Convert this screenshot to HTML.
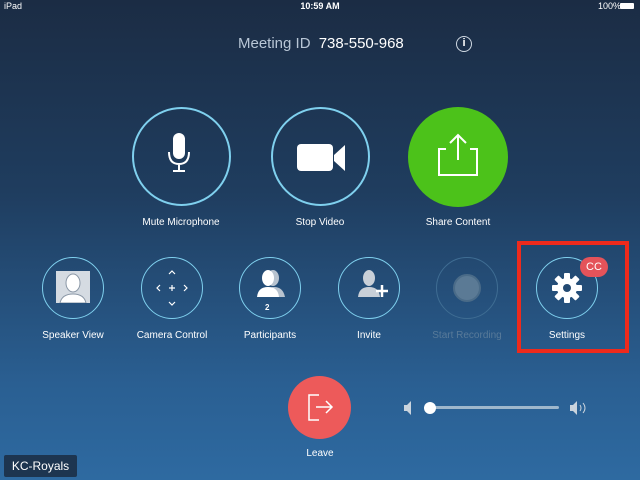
<!DOCTYPE html>
<html><head><style>
body{margin:0;width:640px;height:480px;overflow:hidden;font-family:"Liberation Sans",sans-serif;color:#fff;
background:linear-gradient(180deg,#1b2c44 0%,#1f3d5f 40%,#2a5f92 80%,#2e6aa1 100%);position:relative}
.a{position:absolute}
.lbl{position:absolute;font-size:10px;text-align:center;width:120px;margin-left:-60px}
.c{position:absolute;border-radius:50%;box-sizing:border-box}
</style></head><body>
<div class="a" style="left:4px;top:1px;font-size:9px">iPad</div>
<div class="a" style="left:0;width:640px;top:1px;text-align:center;font-size:9px;font-weight:bold">10:59 AM</div>
<div class="a" style="left:598px;top:1px;font-size:9px">100%</div>
<div class="a" style="left:620px;top:3px;width:14px;height:6px;background:#fff;border-radius:1px"></div>
<div class="a" style="left:238px;top:35px;font-size:15px;color:#b8c6d6">Meeting ID <span style="color:#fff;margin-left:4px">738-550-968</span></div>
<div class="c" style="left:456px;top:36px;width:16px;height:16px;border:1.5px solid #cfd8e2;font-size:11px;text-align:center;line-height:13px;font-weight:bold">i</div>

<div class="c" style="left:132px;top:107px;width:99px;height:99px;border:2px solid #7fd0ee"></div>
<svg class="a" style="left:166px;top:132px" width="30" height="50"><rect x="7" y="1" width="12" height="26" rx="6" fill="#fff"/><path d="M3 20 q0 12 10 12 q10 0 10-12 M13 32 v7 M7 39 h12" stroke="#fff" stroke-width="2" fill="none"/></svg>
<div class="lbl" style="left:181px;top:217px">Mute Microphone</div>

<div class="c" style="left:271px;top:107px;width:99px;height:99px;border:2px solid #7fd0ee"></div>
<svg class="a" style="left:296px;top:142px" width="50" height="32"><rect x="1" y="2" width="36" height="27" rx="4" fill="#fff"/><path d="M38 13 L49 3 V29 L38 19 Z" fill="#fff"/></svg>
<div class="lbl" style="left:320px;top:217px">Stop Video</div>

<div class="c" style="left:408px;top:107px;width:100px;height:100px;background:#4cc21a"></div>
<svg class="a" style="left:436px;top:132px" width="46" height="44"><path d="M10 17 H3 V43 H41 V17 H34 M22 3 V28 M14 11 L22 3 L30 11" stroke="#fff" stroke-width="2" fill="none"/></svg>
<div class="lbl" style="left:458px;top:217px">Share Content</div>

<div class="c" style="left:42px;top:257px;width:62px;height:62px;border:1.5px solid #7fd0ee"></div>
<div class="a" style="left:56px;top:271px;width:34px;height:32px;background:#d5dbe2"></div>
<svg class="a" style="left:56px;top:271px" width="34" height="32"><ellipse cx="17" cy="12" rx="7" ry="9" fill="#fff" stroke="#8a97a6"/><path d="M4 32 q2-9 13-9 q11 0 13 9Z" fill="#fff" stroke="#8a97a6"/></svg>
<div class="lbl" style="left:73px;top:330px">Speaker View</div>

<div class="c" style="left:141px;top:257px;width:62px;height:62px;border:1.5px solid #7fd0ee"></div>
<svg class="a" style="left:152px;top:268px" width="40" height="40" fill="none" stroke="#fff" stroke-width="1.2"><path d="M17 6 l3-3 l3 3 M17 34 l3 3 l3-3 M8 17 l-3 3 l3 3 M32 17 l3 3 l-3 3 M20 17 v6 M17 20 h6"/></svg>
<div class="lbl" style="left:172px;top:330px">Camera Control</div>

<div class="c" style="left:239px;top:257px;width:62px;height:62px;border:1.5px solid #7fd0ee"></div>
<svg class="a" style="left:252px;top:269px" width="36" height="30"><ellipse cx="21" cy="9" rx="6" ry="8" fill="#b8c3cf"/><path d="M12 28 q1-10 10-10 q9 0 11 10Z" fill="#b8c3cf"/><ellipse cx="16" cy="9" rx="6" ry="8" fill="#fff"/><path d="M5 28 q1-10 11-10 q10 0 11 10Z" fill="#fff"/></svg>
<div class="a" style="left:265px;top:303px;font-size:8px;font-weight:bold">2</div>
<div class="lbl" style="left:270px;top:330px">Participants</div>

<div class="c" style="left:338px;top:257px;width:62px;height:62px;border:1.5px solid #7fd0ee"></div>
<svg class="a" style="left:352px;top:269px" width="36" height="30"><ellipse cx="17" cy="9" rx="6" ry="8" fill="#c9d0d8"/><path d="M6 28 q1-10 11-10 q10 0 11 10Z" fill="#c9d0d8"/><path d="M30 16 v12 M24 22 h12" stroke="#fff" stroke-width="2.5"/></svg>
<div class="lbl" style="left:369px;top:330px">Invite</div>

<div class="c" style="left:436px;top:257px;width:62px;height:62px;border:1.5px solid #3f6d93"></div>
<div class="c" style="left:453px;top:274px;width:28px;height:28px;background:#5b7a95;border:2px solid #4a6b88"></div>
<div class="lbl" style="left:467px;top:330px;color:#587a99">Start Recording</div>

<div class="c" style="left:536px;top:257px;width:62px;height:62px;border:1.5px solid #7fd0ee"></div>
<svg class="a" style="left:552px;top:273px" width="30" height="30" viewBox="-15 -15 30 30"><g fill="#fff"><circle r="10"/><g id="t"><rect x="-3" y="-15" width="6" height="30" rx="1"/></g><use href="#t" transform="rotate(45)"/><use href="#t" transform="rotate(90)"/><use href="#t" transform="rotate(135)"/></g><circle r="4" fill="#234a72"/></svg>
<div class="a" style="left:580px;top:257px;width:28px;height:20px;border-radius:10px;background:#e4535a;font-size:11px;text-align:center;line-height:20px">CC</div>
<div class="lbl" style="left:567px;top:330px">Settings</div>
<div class="a" style="left:517px;top:241px;width:104px;height:104px;border:4px solid #ee2a1c"></div>

<div class="c" style="left:288px;top:376px;width:63px;height:63px;background:#ed5a5a"></div>
<svg class="a" style="left:306px;top:392px" width="30" height="30"><path d="M13 3 H3 V28 H13 M10 15 H26 M20 9 L26 15 L20 21" stroke="#fff" stroke-width="1.5" fill="none"/></svg>
<div class="lbl" style="left:320px;top:448px">Leave</div>

<svg class="a" style="left:403px;top:400px" width="190" height="16"><path d="M1 5 h3 l4-4 v14 l-4-4 h-3z" fill="#c9d3dd"/><rect x="26" y="6" width="130" height="3" rx="1.5" fill="#9fb7cc"/><circle cx="27" cy="8" r="6" fill="#fff"/><path d="M167 5 h3 l4-4 v14 l-4-4 h-3z" fill="#c9d3dd"/><path d="M177 5 q2 3 0 6 M180 3 q4 5 0 10" stroke="#c9d3dd" fill="none"/></svg>

<div class="a" style="left:4px;top:455px;width:73px;height:22px;background:#1d3550;border-radius:2px;font-size:12px;text-align:center;line-height:22px">KC-Royals</div>
</body></html>
